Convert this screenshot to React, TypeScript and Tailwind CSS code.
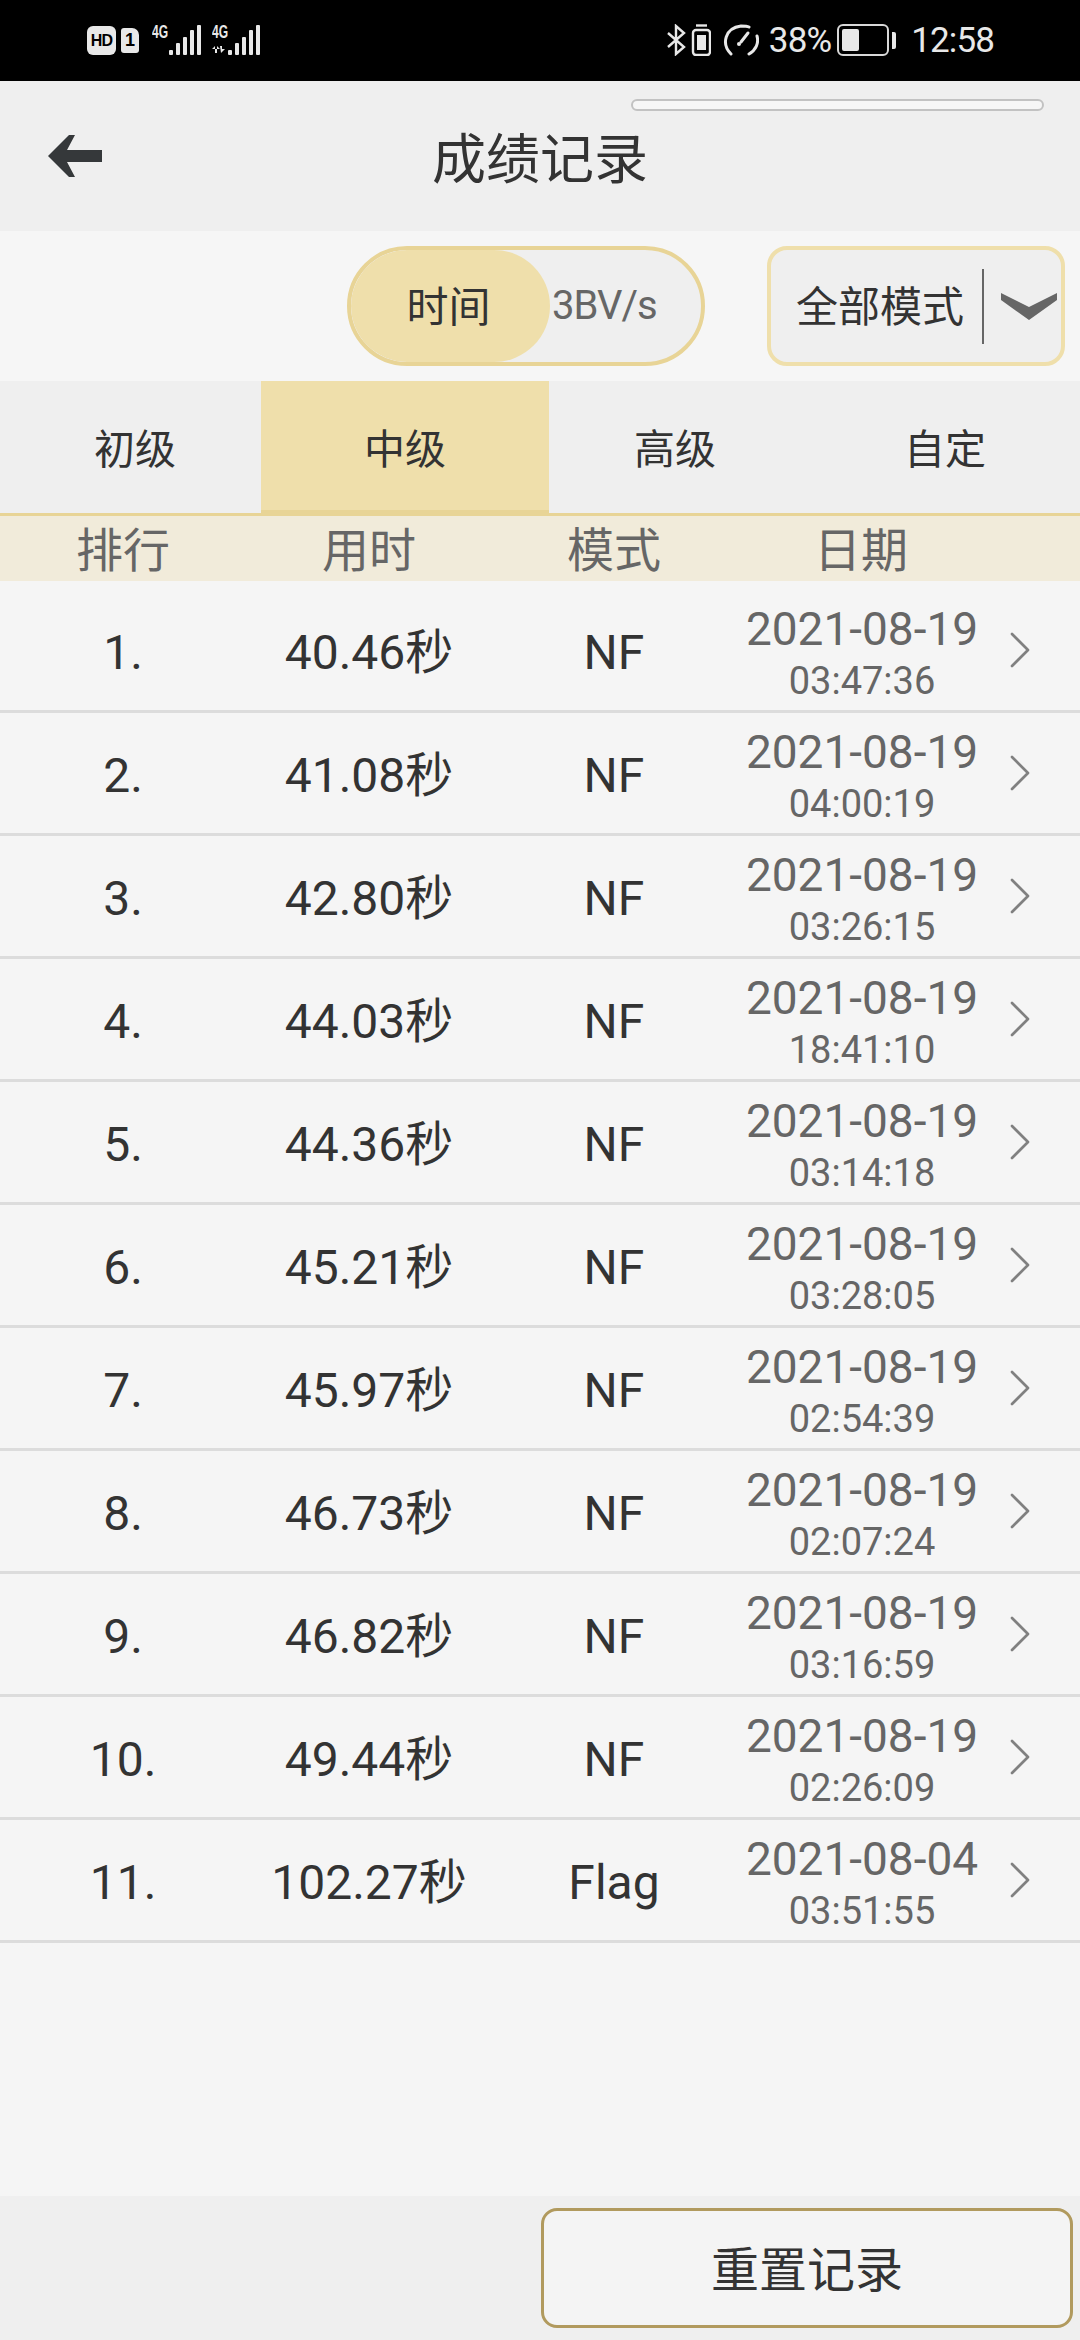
import { ChevronRight } from 'lucide-react';

const rows = [
    { rank: '1.', time: '40.46秒', mode: 'NF', date: '2021-08-19', clock: '03:47:36' },
    { rank: '2.', time: '41.08秒', mode: 'NF', date: '2021-08-19', clock: '04:00:19' },
    { rank: '3.', time: '42.80秒', mode: 'NF', date: '2021-08-19', clock: '03:26:15' },
    { rank: '4.', time: '44.03秒', mode: 'NF', date: '2021-08-19', clock: '18:41:10' },
    { rank: '5.', time: '44.36秒', mode: 'NF', date: '2021-08-19', clock: '03:14:18' },
    { rank: '6.', time: '45.21秒', mode: 'NF', date: '2021-08-19', clock: '03:28:05' },
    { rank: '7.', time: '45.97秒', mode: 'NF', date: '2021-08-19', clock: '02:54:39' },
    { rank: '8.', time: '46.73秒', mode: 'NF', date: '2021-08-19', clock: '02:07:24' },
    { rank: '9.', time: '46.82秒', mode: 'NF', date: '2021-08-19', clock: '03:16:59' },
    { rank: '10.', time: '49.44秒', mode: 'NF', date: '2021-08-19', clock: '02:26:09' },
    { rank: '11.', time: '102.27秒', mode: 'Flag', date: '2021-08-04', clock: '03:51:55' },
];

const font = 'font-["Roboto","Noto_Sans_CJK_SC",sans-serif]';

function SignalBars({ data }: { data?: boolean }) {
    return (
        <div className="relative flex h-[30px] items-end">
            <span className="absolute left-0 top-0 origin-left scale-x-[0.67] font-['Liberation_Sans',sans-serif] text-[18px] leading-[14px] font-bold text-[#e8e8e8]">4G</span>
            {data && (
                <svg className="absolute bottom-[2px] left-0" width="14" height="7" viewBox="0 0 14 7" fill="#e8e8e8">
                    <path d="M0 3 L3 0 L3 7 L5 7 L5 0 L8 3 Z" />
                    <path d="M8 0 L10 0 L10 3 L13 3 L9 7 Z" />
                </svg>
            )}
            <div className={`flex items-end gap-[3px] ${data ? 'ml-[16px]' : 'ml-[17px]'}`}>
                {[5, 12, 18, 25, 30].map((h) => (
                    <span key={h} className="w-[4px] rounded-[1px] bg-[#e8e8e8]" style={{ height: h }} />
                ))}
            </div>
        </div>
    );
}

function StatusBar() {
    return (
        <div className="flex h-[81px] items-start justify-between bg-black pl-[87px] pr-[86px] pt-[25px]">
            <div className="flex items-start">
                <span className="mt-[1px] flex h-[29px] w-[29px] items-center justify-center rounded-[6px] bg-[#e8e8e8] font-['Liberation_Sans',sans-serif] text-[16px] font-bold tracking-tighter text-black">HD</span>
                <span className="ml-[5px] mt-[3px] flex h-[25px] w-[18px] items-center justify-center rounded-[3px] rounded-tr-[7px] bg-[#e8e8e8] font-['Liberation_Sans',sans-serif] text-[18px] font-bold text-black">1</span>
                <div className="ml-[13px]">
                    <SignalBars />
                </div>
                <div className="ml-[11px]">
                    <SignalBars data />
                </div>
            </div>
            <div className="-mt-[1px] flex h-[32px] items-center text-[#e8e8e8]">
                {/* bluetooth + headset battery */}
                <svg width="44" height="32" viewBox="0 0 44 32" fill="none" stroke="#e8e8e8" strokeWidth="2.4">
                    <path d="M1 9 L17 23 L9 30 V2 L17 9 L1 23" />
                    <rect x="26" y="6" width="17" height="25" rx="3" />
                    <rect x="30" y="11" width="9" height="15" fill="#e8e8e8" stroke="none" />
                    <path d="M29 1.5 H40" />
                </svg>
                {/* speedometer */}
                <svg className="ml-[12px]" width="36" height="32" viewBox="0 0 36 32" fill="none" stroke="#e8e8e8" strokeWidth="3" strokeLinecap="round">
                    <path d="M8 30 C-2 20 2 4 18 2 C22 2 24 2 26 3" />
                    <path d="M26 30 C33 26 36 19 34 12" />
                    <path d="M18 18 L25 9" />
                    <circle cx="16" cy="20" r="2" fill="#e8e8e8" stroke="none" />
                </svg>
                <span className={`ml-[10px] pt-[2px] text-[35px] leading-[36px] tracking-tight ${font}`}>38%</span>
                {/* battery */}
                <div className="ml-[6px] flex items-center gap-[3px]">
                    <div className="flex h-[32px] w-[52px] items-center rounded-[6px] border-[2px] border-[#d8d8d8] p-[3px]">
                        <div className="h-full w-[17px] rounded-[2px] bg-[#e8e8e8]" />
                    </div>
                    <div className="h-[17px] w-[4px] rounded-r-[2px] bg-[#e8e8e8]" />
                </div>
                <span className={`ml-[15px] pt-[2px] text-[35px] leading-[36px] tracking-tight ${font}`}>12:58</span>
            </div>
        </div>
    );
}

function Header() {
    return (
        <div className="relative flex h-[150px] items-center justify-center bg-[#efefef]">
            <div className="absolute left-[631px] top-[18px] h-[12px] w-[413px] rounded-full border-[2px] border-[#c2c2c2] bg-[#f6f6f6]" />
            <svg className="absolute left-[48px] top-[54px]" width="54" height="42" viewBox="0 0 54 42" fill="#35383a">
                <path d="M21 0 L27 0 L19 15 H54 V27 H19 L27 42 H21 L0 21 Z" />
            </svg>
            <h1 className={`pt-[9px] text-[54px] leading-[60px] text-[#333] ${font}`}>成绩记录</h1>
        </div>
    );
}

function Filters() {
    return (
        <div className="flex h-[150px] items-start justify-end bg-[#f6f6f6] pt-[15px] pr-[15px]">
            <div className="relative flex h-[120px] w-[358px] overflow-hidden rounded-[60px] border-[4px] border-[#e8d496] bg-[#efefef]">
                <div className={`flex h-full w-[199px] items-center justify-center rounded-[56px] bg-[#efdfab] pr-[4px] pt-[2px] text-[42px] text-[#333] ${font}`}>时间</div>
                <span className={`flex items-center pl-[2px] text-[40px] tracking-tight text-[#666] ${font}`}>3BV/s</span>
            </div>
            <div className="ml-[62px] flex h-[120px] w-[298px] items-center rounded-[20px] border-[4px] border-[#efdfab] bg-[#efefef]">
                <span className={`ml-[25px] pt-[2px] text-[42px] whitespace-nowrap text-[#333] ${font}`}>全部模式</span>
                <div className="ml-[18px] h-[75px] w-[2px] bg-[#666]" />
                <svg className="ml-[17px]" width="56" height="28" viewBox="0 0 56 28" fill="#666">
                    <path d="M0 1 L28 15 L56 1 L56 8 L28 28 L0 8 Z" />
                </svg>
            </div>
        </div>
    );
}

function Tabs() {
    return (
        <div className="relative grid h-[135px] grid-cols-4 border-b-[3px] border-[#e8d496] bg-[#efefef]">
            {/* active tab highlight */}
            <div className="absolute bottom-[-3px] left-[261px] top-0 w-[288px] border-b-[6px] border-[#e8d496] bg-[#efdfab]" />
            {['初级', '中级', '高级', '自定'].map((t) => (
                <div key={t} className={`relative flex items-center justify-center pt-[7px] text-[41px] text-[#333] ${t === '中级' ? 'text-[#2a2a2a]' : ''} ${font}`}>{t}</div>
            ))}
        </div>
    );
}

function TableHead() {
    return (
        <div className={`flex h-[65px] items-center bg-[#f1ebda] pt-[5px] text-[47px] text-[#666] ${font}`}>
            <span className="w-[246px] text-center">排行</span>
            <span className="w-[246px] text-center">用时</span>
            <span className="w-[244px] text-center">模式</span>
            <span className="w-[250px] text-center">日期</span>
        </div>
    );
}

function Row({ rank, time, mode, date, clock }: (typeof rows)[number]) {
    return (
        <div className={`flex h-[123px] shrink-0 items-center border-b-[3px] border-[#dcdcdc] pt-[6px] first:h-[132px] first:pt-[15px] ${font}`}>
            <span className="w-[246px] text-center text-[48px] text-[#333]">{rank}</span>
            <span className="w-[246px] text-center text-[48px] text-[#333]">{time}</span>
            <span className="w-[246px] pr-[2px] text-center text-[48px] text-[#333]">{mode}</span>
            <div className="w-[248px] pt-[3px] text-center text-[#666]">
                <div className="text-[46px] leading-[52px]">{date}</div>
                <div className="text-[38px] leading-[52px]">{clock}</div>
            </div>
            <ChevronRight className="-mt-[6px] ml-[2px] h-[64px] w-[64px] text-[#808080]" strokeWidth={1} />
        </div>
    );
}

export default function App() {
    return (
        <div className="flex h-[2340px] w-[1080px] flex-col overflow-hidden bg-[#f5f5f5]">
            <StatusBar />
            <Header />
            <Filters />
            <Tabs />
            <TableHead />
            <div className="flex flex-1 flex-col">
                {rows.map((r) => (
                    <Row key={r.rank} {...r} />
                ))}
            </div>
            <div className="flex h-[144px] items-start justify-end bg-[#efefef] pt-[12px] pr-[7px]">
                <button className={`h-[120px] w-[532px] rounded-[16px] border-[3px] border-[#b19a5e] bg-[#f4f4f4] pt-[5px] text-[48px] text-[#333] ${font}`}>重置记录</button>
            </div>
        </div>
    );
}
